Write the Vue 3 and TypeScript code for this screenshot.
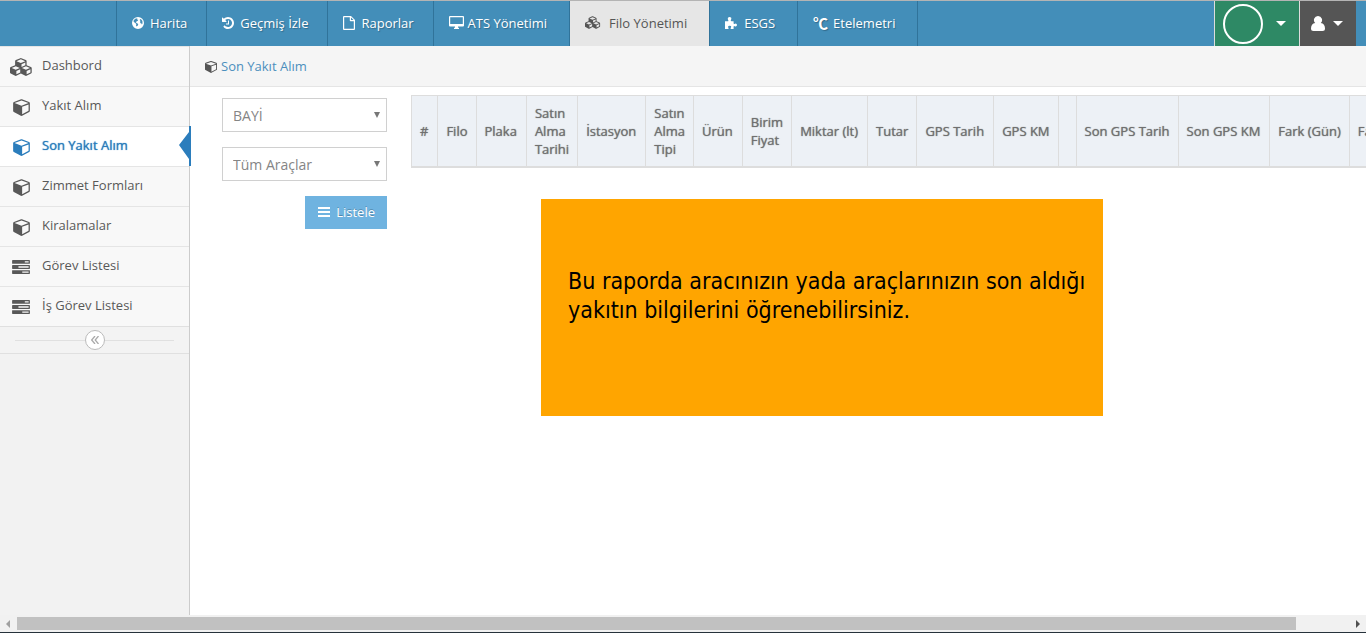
<script setup lang="ts">
import { ref } from 'vue'

interface Glyph { box: string; w: number; h: number; d: string }
interface NavItem { label: string; icon: string; roomy?: boolean; active?: boolean }
interface MenuItem { label: string; icon: string; active?: boolean }

const glyphs: Record<string, Glyph> = {
  globe: {
    box: '0 0 12 12', w: 12, h: 12,
    d: 'M6 0a6 6 0 1 1 0 12a6 6 0 0 1 0-12zM3.200 1.700L1.600 3.400L1.700 5L3 5.700L4.300 7L4 8.400L4.700 9.600L6 8.200L6.200 7L4.700 6L3.800 5.200L4.500 4.600L5.800 3.800L6.200 2.800L5 2.400L5.400 1.300zM8.400 2L7.600 3L8.500 3.900L8 5L8.600 6.200L9.500 6.500L9.700 7.600L10.500 6.400L10.400 4L9.500 2.700z'
  },
  history: {
    box: '128 128 1536 1536', w: 12, h: 12,
    d: 'M1664 896q0 156-61 298t-164 245-245 164-298 61q-172 0-327-72.500t-264-204.500q-7-10-6.500-22.500t8.500-20.500l137-138q10-9 25-9 16 2 23 12 73 95 179 147t225 52q104 0 198.500-40.500t163.500-109.500 109.500-163.500 40.500-198.500-40.500-198.500-109.500-163.500-163.500-109.500-198.500-40.500q-98 0-188 35.500t-160 101.500l137 138q31 30 14 69-17 40-59 40h-448q-26 0-45-19t-19-45v-448q0-42 40-59 39-17 69 14l130 129q107-101 244.500-156.500t284.500-55.500q156 0 298 61t245 164 164 245 61 298zm-640-288v448q0 14-9 23t-23 9h-320q-14 0-23-9t-9-23v-64q0-14 9-23t23-9h224v-352q0-14 9-23t23-9h64q14 0 23 9t9 23z'
  },
  file: {
    box: '0 0 12 14', w: 12, h: 14,
    d: 'M1 0H8L12 4V13Q12 14 11 14H1Q0 14 0 13V1Q0 0 1 0zM1.200 1.200V12.800H10.800V5.200H7.500Q6.800 5.200 6.800 4.500V1.200zM8 1.500V4H10.500z'
  },
  desktop: {
    box: '0 0 15 13', w: 15, h: 13,
    d: 'M1 0H14Q15 0 15 1V9.500Q15 10.500 14 10.500H9V11.500L10 12V13H5V12L6 11.500V10.500H1Q0 10.500 0 9.500V1Q0 0 1 0zM1.200 1.200V8H13.800V1.200z'
  },
  cubes: {
    box: '0 0 2304 1792', w: 16, h: 13,
    d: 'M640 1632l384-192v-314l-384 164v342zm-64-454l404-173-404-173-404 173zm1088 454l384-192v-314l-384 164v342zm-64-454l404-173-404-173-404 173zm-448-293l384-165v-266l-384 164v267zm-64-379l441-189-441-189-441 189zm1088 518v416q0 36-19 67t-52 47l-448 224q-25 14-57 14t-57-14l-448-224q-4-2-7-4-2 2-7 4l-448 224q-25 14-57 14t-57-14l-448-224q-33-16-52-47t-19-67v-416q0-38 21.500-70t56.500-48l434-186v-400q0-38 21.500-70t56.500-48l448-192q23-10 50-10t50 10l448 192q35 16 56.500 48t21.500 70v400l434 186q36 16 57 48t21 70z'
  },
  cube: {
    box: '0 0 1664 1792', w: 12, h: 13,
    d: 'M896 1629l640-349v-636l-640 233v752zm-64-865l698-254-698-254-698 254zm832-252v768q0 35-18 65t-49 47l-704 384q-28 16-61 16t-61-16l-704-384q-31-17-49-47t-18-65v-768q0-40 23-73t61-50l704-256q22-8 44-8t44 8l704 256q38 17 61 50t23 73z'
  },
  puzzle: {
    box: '0 0 12 12', w: 12, h: 12,
    d: 'M0 4.200H2.500Q3.700 4.200 3.300 3.200Q2.500 1.800 3 .8Q3.600 0 4.600 0Q5.600 0 6.200 .8Q6.600 1.800 5.900 3.100Q5.500 4.200 6.600 4.200H8.600V6.300Q8.700 7.300 9.500 6.900Q10.800 6 11.600 7Q12.300 8 11.600 9.100Q10.800 10 9.600 9.200Q8.700 8.700 8.600 9.800V12H6.100Q5.200 11.800 5.700 10.900Q6.500 9.700 5.900 9.100Q4.600 8.300 3.400 9.100Q2.800 9.900 3.500 11Q3.800 11.900 2.900 12H0z'
  },
  tasks: {
    box: '0 128 1792 1408', w: 18, h: 14,
    d: 'M1024 1408h640v-128h-640v128zm-384-512h1024v-128h-1024v128zm640-512h384v-128h-384v128zm512 832v256q0 26-19 45t-45 19h-1664q-26 0-45-19t-19-45v-256q0-26 19-45t45-19h1664q26 0 45 19t19 45zm0-512v256q0 26-19 45t-45 19h-1664q-26 0-45-19t-19-45v-256q0-26 19-45t45-19h1664q26 0 45 19t19 45zm0-512v256q0 26-19 45t-45 19h-1664q-26 0-45-19t-19-45v-256q0-26 19-45t45-19h1664q26 0 45 19t19 45z'
  },
  user: {
    box: '0 0 14 15', w: 14, h: 15,
    d: 'M7 0A4 4 0 0 1 9.800 6.900Q14 7.500 14 12.500Q14 15 11.500 15H2.500Q0 15 0 12.500Q0 7.500 4.200 6.900A4 4 0 0 1 7 0z'
  }
}

const nav: NavItem[] = [
  { label: 'Harita', icon: 'globe' },
  { label: 'Geçmiş İzle', icon: 'history' },
  { label: 'Raporlar', icon: 'file' },
  { label: 'ATS Yönetimi', icon: 'desktop', roomy: true },
  { label: 'Filo Yönetimi', icon: 'cubes', roomy: true, active: true },
  { label: 'ESGS', icon: 'puzzle', roomy: true },
  { label: 'Etelemetri', icon: 'celsius', roomy: true }
]

const menu: MenuItem[] = [
  { label: 'Dashbord', icon: 'cubes' },
  { label: 'Yakıt Alım', icon: 'cube' },
  { label: 'Son Yakıt Alım', icon: 'cube', active: true },
  { label: 'Zimmet Formları', icon: 'cube' },
  { label: 'Kiralamalar', icon: 'cube' },
  { label: 'Görev Listesi', icon: 'tasks' },
  { label: 'İş Görev Listesi', icon: 'tasks' }
]

const columns: string[] = [
  '#', 'Filo', 'Plaka', 'Satın\nAlma\nTarihi', 'İstasyon', 'Satın\nAlma\nTipi', 'Ürün', 'Birim\nFiyat',
  'Miktar (lt)', 'Tutar', 'GPS Tarih', 'GPS KM', '', 'Son GPS Tarih', 'Son GPS KM', 'Fark (Gün)', 'Fark (KM)'
]

const dealer = ref('BAYİ')
const vehicle = ref('Tüm Araçlar')
</script>

<template>
  <div class="page">
    <header class="topbar">
      <nav class="nav">
        <a v-for="n in nav" :key="n.label" href="#" class="nav-item" :class="{ active: n.active, roomy: n.roomy }">
          <span class="nav-icon" :class="n.icon">
            <span v-if="n.icon === 'celsius'" class="degree">℃</span>
            <svg v-else :viewBox="glyphs[n.icon].box" :width="glyphs[n.icon].w" :height="glyphs[n.icon].h" aria-hidden="true">
              <path :d="glyphs[n.icon].d" fill="currentColor" fill-rule="evenodd" />
            </svg>
          </span>
          <span>{{ n.label }}</span>
        </a>
      </nav>
      <div class="tools">
        <button type="button" class="tool company" aria-label="Firma">
          <span class="avatar"></span>
          <svg viewBox="0 0 10 5" width="10" height="5" aria-hidden="true"><path d="M0 0H10L5 5z" fill="#fff" /></svg>
        </button>
        <button type="button" class="tool account" aria-label="Kullanıcı">
          <svg :viewBox="glyphs.user.box" width="14" height="15" aria-hidden="true"><path :d="glyphs.user.d" fill="#fff" /></svg>
          <svg viewBox="0 0 10 5" width="10" height="5" aria-hidden="true"><path d="M0 0H10L5 5z" fill="#fff" /></svg>
        </button>
      </div>
    </header>

    <div class="body">
      <aside class="sidebar">
        <a v-for="m in menu" :key="m.label" href="#" class="menu-item" :class="{ active: m.active }">
          <span class="menu-icon">
            <svg :viewBox="glyphs[m.icon].box" :class="m.icon" aria-hidden="true">
              <path :d="glyphs[m.icon].d" fill="currentColor" fill-rule="evenodd" />
            </svg>
          </span>
          <span>{{ m.label }}</span>
          <svg v-if="m.active" class="pointer" viewBox="0 0 12 40" width="12" height="40" aria-hidden="true">
            <path d="M10 0H12V40H10V33L0 19L10 6z" fill="#2b7dbc" />
          </svg>
        </a>
        <div class="collapse">
          <button type="button" class="collapse-button" aria-label="Menüyü daralt">
            <svg viewBox="0 0 8 8" width="8" height="8" aria-hidden="true">
              <path d="M4 0L.7 4L4 8M7.500 0L4.200 4L7.500 8" fill="none" stroke="#aaa" stroke-width="1.300" />
            </svg>
          </button>
        </div>
      </aside>

      <main class="main">
        <div class="breadcrumb">
          <svg :viewBox="glyphs.cube.box" width="12" height="13" aria-hidden="true">
            <path :d="glyphs.cube.d" fill="#555" fill-rule="evenodd" />
          </svg>
          <a href="#">Son Yakıt Alım</a>
        </div>
        <div class="content">
          <form class="filters" @submit.prevent>
            <div class="select">
              <select v-model="dealer" aria-label="Bayi"><option>BAYİ</option></select>
              <svg viewBox="0 0 6 6" width="6" height="6" aria-hidden="true"><path d="M0 0H6L3 6z" fill="#777" /></svg>
            </div>
            <div class="select">
              <select v-model="vehicle" aria-label="Araç"><option>Tüm Araçlar</option></select>
              <svg viewBox="0 0 6 6" width="6" height="6" aria-hidden="true"><path d="M0 0H6L3 6z" fill="#777" /></svg>
            </div>
            <button type="submit" class="list-button">
              <svg viewBox="0 0 12 10" width="12" height="10" aria-hidden="true"><path d="M0 0H12V2H0zM0 4H12V6H0zM0 8H12V10H0z" fill="#fff" /></svg>
              <span>Listele</span>
            </button>
          </form>
          <section class="report">
            <table>
              <thead>
                <tr><th v-for="(c, i) in columns" :key="i" scope="col">{{ c }}</th></tr>
              </thead>
            </table>
            <p class="note">Bu raporda aracınızın yada araçlarınızın son aldığı yakıtın bilgilerini öğrenebilirsiniz.</p>
          </section>
        </div>
      </main>
    </div>

    <div class="scrollbar" aria-hidden="true">
      <svg viewBox="0 0 17 12" width="17" height="12"><path d="M10 2V10L6 6z" fill="#a0a0a0" /></svg>
      <div class="track"><div class="thumb"></div></div>
      <svg viewBox="0 0 17 12" width="17" height="12"><path d="M7 2V10L11 6z" fill="#505050" /></svg>
    </div>
  </div>
</template>

<style>
body { margin: 0; }
</style>

<style scoped>
* { box-sizing: border-box; }
svg { display: block; flex: none; }
a { text-decoration: none; }
button { font: inherit; cursor: pointer; }
.page {
  display: flex;
  flex-direction: column;
  min-height: 100vh;
  overflow: hidden;
  background: #fff;
  color: #555;
  font-family: "Open Sans", sans-serif;
  font-size: 13px;
}
.topbar {
  display: flex;
  justify-content: space-between;
  height: 46px;
  padding: 0 10px 0 116px;
  border-top: 1px solid #b4b4b4;
  background: #438eb9;
}
.nav { display: flex; border-right: 1px solid #30739a; }
.nav-item {
  display: flex;
  align-items: center;
  padding: 0 19px 2px 15px;
  border-left: 1px solid #30739a;
  color: #fff;
  text-shadow: 1px 1px 1px rgba(0, 0, 0, .25);
  white-space: nowrap;
}
.nav-item.roomy { padding-right: 22px; }
.nav-item.active { background: #e6e6e6; color: #555; text-shadow: none; }
.nav-icon { width: 18px; }
.nav-icon.desktop, .nav-icon.puzzle { width: 19px; }
.nav-icon.cubes { width: 24px; }
.nav-icon.celsius { width: 20px; }
.degree { display: block; font-family: "Noto Sans CJK SC", sans-serif; font-size: 15px; font-weight: 700; line-height: 16px; }
.tools { display: flex; }
.tool {
  display: flex;
  align-items: center;
  border: 0;
  border-left: 1px solid #ddd;
}
.company { gap: 13px; padding: 0 13px 0 8px; background: #2e8965; }
.account { gap: 8px; padding: 0 13px 0 11px; background: #555; }
.avatar { width: 40px; height: 40px; border: 2px solid #fff; border-radius: 50%; }
.body { display: flex; flex: 1; }
.sidebar {
  flex: none;
  width: 190px;
  border-right: 1px solid #ccc;
  background: #f2f2f2;
}
.menu-item {
  position: relative;
  display: flex;
  align-items: center;
  height: 40px;
  padding: 0 0 4px 8px;
  border-top: 1px solid #e5e5e5;
  background: #f8f8f8;
  color: #585858;
}
.menu-item.active { background: #fff; color: #2b7dbc; text-shadow: 0 0 1px #2b7dbc; }
.menu-icon { display: flex; justify-content: center; width: 26px; margin-right: 8px; padding-top: 4px; }
.menu-icon .cubes { width: 23px; height: 18px; }
.menu-icon .cube { width: 17px; height: 18px; }
.menu-icon .tasks { width: 18px; height: 14px; }
.pointer { position: absolute; top: -1px; right: -2px; }
.collapse {
  display: flex;
  align-items: center;
  justify-content: center;
  height: 28px;
  border-top: 1px solid #e0e0e0;
  border-bottom: 1px solid #e0e0e0;
  background: #f3f3f3;
}
.collapse::before, .collapse::after { content: ""; flex: 1; height: 1px; background: #e0e0e0; }
.collapse::before { margin-left: 15px; }
.collapse::after { margin-right: 15px; }
.collapse-button {
  display: flex;
  align-items: center;
  justify-content: center;
  width: 20px;
  height: 20px;
  padding: 0;
  border: 1px solid #bbb;
  border-radius: 50%;
  background: #fff;
}
.main { flex: 1; min-width: 0; }
.breadcrumb {
  display: flex;
  align-items: center;
  gap: 4px;
  height: 41px;
  padding-left: 15px;
  border-bottom: 1px solid #e5e5e5;
  background: #f5f5f5;
}
.breadcrumb a { color: #4c8fbd; }
.content { display: flex; padding: 8px 0 0 32px; }
.filters {
  display: flex;
  flex: none;
  flex-direction: column;
  gap: 15px;
  width: 165px;
  margin-right: 24px;
  padding-top: 3px;
}
.select { position: relative; }
.select select {
  display: block;
  width: 100%;
  height: 34px;
  padding: 0 20px 0 10px;
  border: 1px solid #d0d0d0;
  border-radius: 0;
  appearance: none;
  background: #fff;
  color: #858585;
  font: 14px "Open Sans", sans-serif;
}
.select svg { position: absolute; top: 14px; right: 7px; pointer-events: none; }
.list-button {
  display: flex;
  align-items: center;
  align-self: flex-end;
  gap: 6px;
  height: 33px;
  padding: 0 12px 2px 13px;
  border: 0;
  background: #6fb3e0;
  color: #fff;
  text-shadow: 0 -1px 0 rgba(0, 0, 0, .25);
}
.report { flex: 1; min-width: 0; overflow: hidden; }
table { border-collapse: collapse; }
th {
  padding: 8px;
  border: 1px solid #ddd;
  border-bottom-width: 2px;
  background: #edf1f6;
  color: #707070;
  font-weight: 400;
  line-height: 18px;
  text-align: left;
  text-shadow: 0 0 1px #707070;
  white-space: pre;
}
th:nth-child(odd) { padding-right: 9px; }
.note {
  max-width: 562px;
  margin: 31px 0 0 130px;
  padding: 68px 10px 91px 27px;
  background: #ffa500;
  color: #000;
  font-family: "DejaVu Sans Condensed", "DejaVu Sans", sans-serif;
  font-size: 23px;
  line-height: 29px;
}
.scrollbar {
  display: flex;
  align-items: center;
  height: 18px;
  border-bottom: 1px solid #26323b;
  background: #f1f1f1;
}
.track { flex: 1; }
.thumb { width: 96%; height: 13px; background: #c1c1c1; }
</style>
